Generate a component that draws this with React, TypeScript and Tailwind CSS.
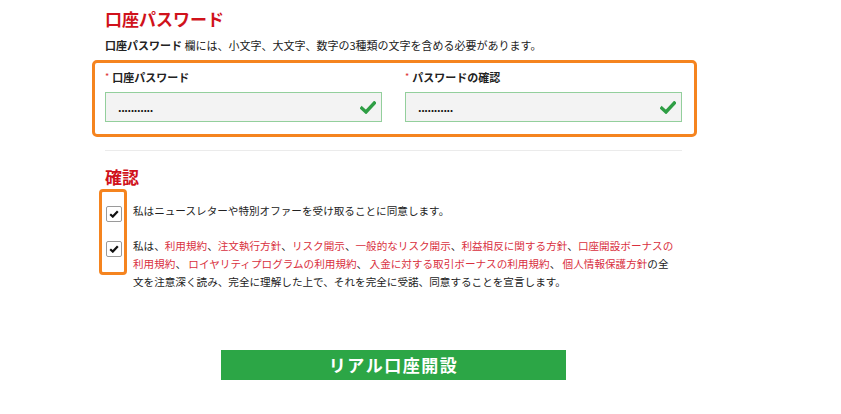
const font = { fontFamily: '"Noto Sans CJK JP", "Noto Sans", sans-serif' };

const GreenCheck = () => (
  <svg width="16" height="13" viewBox="0 0 16 13" className="shrink-0">
    <path d="M1.8 7.2 L6 11 L14.3 2" fill="none" stroke="#2e9e44" strokeWidth="3.4" strokeLinecap="square" />
  </svg>
);

const PasswordField = ({ label }: { label: string }) => (
  <div className="flex-1">
    <div className="flex h-4 items-center text-[11px] font-bold leading-4 text-[#222]">
      <span className="mr-[3px] text-[9px] font-normal text-[#d33]">*</span>
      {label}
    </div>
    <div className="mt-[7px] flex h-[30px] items-center justify-between border border-[#93cf9c] bg-[#f3f3f3] pl-3 pr-[5px]">
      <span className="text-[11px] font-bold leading-none tracking-[-0.4px] text-[#111]">...........</span>
      <GreenCheck />
    </div>
  </div>
);

const Box = () => (
  <span className="mt-1 flex h-4 w-4 shrink-0 items-center justify-center rounded-[2px] border border-[#9a9a9a] bg-white">
    <svg width="10" height="8" viewBox="0 0 10 8">
      <path d="M1.2 4.2 L3.8 6.6 L8.8 1.2" fill="none" stroke="#111" strokeWidth="2.2" />
    </svg>
  </span>
);

const Link = ({ children }: { children: React.ReactNode }) => (
  <span className="text-[#d9303e]">{children}</span>
);

export default function App() {
  return (
    <div className="min-h-[414px] w-[841px] bg-white" style={font}>
      <div className="ml-[105px] w-[577px] pt-[7px]">
        <h2 className="text-[17px] font-bold leading-6 text-[#d0121b]">口座パスワード</h2>
        <p className="mt-[6px] text-[11px] leading-4 text-[#222]">
          <span className="font-bold">口座パスワード</span> 欄には、小文字、大文字、数字の3種類の文字を含める必要があります。
        </p>

        <div className="relative mt-4">
          <div className="pointer-events-none absolute -left-[13px] -right-[15px] -top-[9px] -bottom-[15px] rounded-[5px] border-[3px] border-[#f5841f]" />
          <div className="flex gap-[23px]">
            <PasswordField label="口座パスワード" />
            <PasswordField label="パスワードの確認" />
          </div>
        </div>

        <div className="mt-[28px] border-t border-[#ebebeb]" />

        <h2 className="mt-[14px] text-[17px] font-bold leading-6 text-[#d0121b]">確認</h2>

        <div className="relative mt-[13px]">
          <div className="pointer-events-none absolute -left-[6px] -top-[13px] h-[86px] w-[28px] rounded-[4px] border-[3px] border-[#f5841f]" />
          <div className="flex items-start gap-[11px] pl-[1px]">
            <Box />
            <p className="text-[10.6px] leading-[18px] text-[#222]">私はニュースレターや特別オファーを受け取ることに同意します。</p>
          </div>
          <div className="mt-[15px] flex items-start gap-[11px] pl-[1px]">
            <Box />
            <p className="whitespace-nowrap text-[10.6px] leading-[18px] text-[#222]">
              <span className="block">
                私は、<Link>利用規約</Link>、<Link>注文執行方針</Link>、<Link>リスク開示</Link>、<Link>一般的なリスク開示</Link>、<Link>利益相反に関する方針</Link>、<Link>口座開設ボーナスの</Link>
              </span>
              <span className="block">
                <Link>利用規約</Link>、 <Link>ロイヤリティプログラムの利用規約</Link>、 <Link>入金に対する取引ボーナスの利用規約</Link>、 <Link>個人情報保護方針</Link>の全
              </span>
              <span className="block">文を注意深く読み、完全に理解した上で、それを完全に受諾、同意することを宣言します。</span>
            </p>
          </div>
        </div>

        <div className="mt-[59px] flex justify-center">
          <button className="flex h-[30px] w-[345px] items-center justify-center bg-[#2ca646] text-[17px] font-bold tracking-[1.5px] text-white">
            リアル口座開設
          </button>
        </div>
      </div>
    </div>
  );
}
